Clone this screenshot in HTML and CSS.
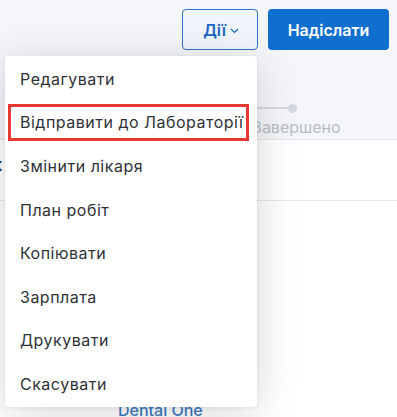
FILE: index.html
```html
<!DOCTYPE html>
<html lang="uk">
<head>
<meta charset="utf-8">
<link rel="stylesheet" href="styles.css">
</head>
<body>
<div class="page">
  <div class="top">
    <div class="actions">
      <button class="btn-outline">Дії <svg class="chev" width="9" height="6" viewBox="0 0 9 6"><path d="M1 1l3.5 3.5L8 1" fill="none" stroke="#1a66c2" stroke-width="1.2"/></svg></button>
      <button class="btn-primary">Надіслати</button>
    </div>
    <div class="stepper">
      <div class="step-track"><span class="line"></span><span class="dot"></span></div>
      <div class="step-label">Завершено</div>
    </div>
  </div>
  <div class="content">
    <div class="row row-1"><span class="cut">к</span></div>
    <div class="row row-2"></div>
    <div class="footer"><a class="brand">Dental One</a></div>
  </div>
</div>
<div class="menu">
  <div class="item">Редагувати</div>
  <div class="item active">Відправити до Лабораторії</div>
  <div class="item">Змінити лікаря</div>
  <div class="item">План робіт</div>
  <div class="item">Копіювати</div>
  <div class="item">Зарплата</div>
  <div class="item">Друкувати</div>
  <div class="item">Скасувати</div>
</div>
</body>
</html>
```
FILE: styles.css
```css
html, body { margin: 0; padding: 0; }
body {
  width: 397px;
  height: 417px;
  overflow: hidden;
  background: #ffffff;
  font-family: "Inter", "Noto Sans", sans-serif;
  position: relative;
}
.page { display: flex; flex-direction: column; height: 417px; }
.top {
  background: #f4f6f9;
  height: 140px;
  border-bottom: 1px solid #e3e6ea;
  box-sizing: border-box;
  display: flex;
  flex-direction: column;
}
.actions {
  display: flex;
  justify-content: flex-end;
  gap: 10px;
  padding: 9px 8px 0 0;
}
.btn-outline {
  height: 41px;
  width: 76px;
  box-sizing: border-box;
  border: 1px solid #2a73c6;
  border-radius: 4px;
  background: #f1f6fc;
  color: #1a66c2;
  font-family: inherit;
  font-size: 16px;
  font-weight: 600;
  display: flex;
  align-items: center;
  justify-content: center;
  gap: 4px;
  padding: 0 0 0 2px;
}
.chev { margin-top: 3px; }
.btn-primary {
  height: 41px;
  width: 121px;
  border: none;
  border-radius: 4px;
  background: #0f6fcf;
  color: #ffffff;
  font-family: inherit;
  font-size: 16px;
  font-weight: 600;
}
.stepper {
  margin-top: 54px;
  margin-left: 252px;
  position: relative;
}
.step-track { height: 8px; display: flex; align-items: center; margin-left: -30px; }
.line { width: 70px; height: 2px; background: #d4d8de; }
.dot { width: 9px; height: 9px; border-radius: 50%; background: #d4d8de; margin-left: -4px; }
.step-label {
  margin-top: 5px;
  font-size: 16px;
  color: #b9bec6;
}
.content { flex: 1; display: flex; flex-direction: column; }
.row-1 { height: 60px; border-bottom: 1px solid #e6e8ec; position: relative; }
.cut {
  color: #1f3b63;
  font-size: 18px;
  font-weight: 600;
  margin-left: -8px;
  display: block;
  margin-top: 14px;
}
.row-2 { flex: 1; }
.footer { height: 22px; padding-left: 118px; }
.brand {
  color: #3b7cc2;
  font-size: 16px;
  font-weight: 500;
  line-height: 14px;
  display: block;
  margin-top: 8px;
}
.menu {
  position: absolute;
  left: 5px;
  top: 56px;
  width: 252px;
  height: 351px;
  box-sizing: border-box;
  background: #ffffff;
  border-radius: 4px;
  box-shadow: 0 6px 44px rgba(0, 0, 0, 0.16), 0 1px 4px rgba(0, 0, 0, 0.06);
  padding-top: 1px;
  display: flex;
  flex-direction: column;
}
.item {
  height: 43.6px;
  display: flex;
  align-items: center;
  padding-left: 15px;
  font-size: 16px;
  color: #2f3237;
  letter-spacing: 0.5px;
  box-sizing: border-box;
}
.item.active {
  margin: 0 8px 0 3px;
  padding-left: 9px;
  height: 37px;
  border: 3px solid #e53935;
  margin-top: 3px;
  margin-bottom: 3.6px;
}
```
